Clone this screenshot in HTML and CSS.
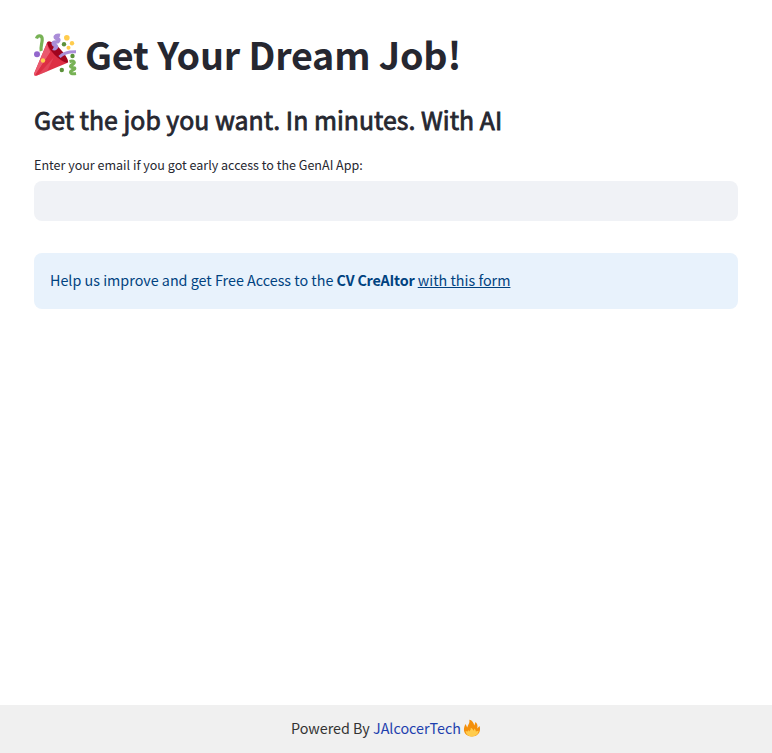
FILE: index.html
```html
<!DOCTYPE html>
<html lang="en">
<head>
<meta charset="utf-8">
<title>Get Your Dream Job!</title>
<link rel="stylesheet" href="styles.css">
</head>
<body>
<main class="page">
  <h1 class="title">
    <svg class="party" viewBox="0 0 44 44" aria-hidden="true">
      <path d="M14.3 9 L1.2 40.2 Q0.6 43.2 3.6 42.7 L34 30 Q35.5 27 28 18 Q18 6 14.3 9Z" fill="#dd2e44"/>
      <path d="M14.3 9.5 L1.2 40.2 Q.8 42 2 42.6 L17.5 19 Q14 13 14.3 9.5Z" fill="#ea596e"/>
      <path d="M17.5 19 L2 42.6 L21 24.5Z" fill="#dd2e44"/>
      <path d="M21 24 L14 38.4 L5 42.1Z" fill="#ea596e" opacity=".5"/>
      <path d="M14.5 9 C19 5 36.5 24 35 29.5 C30 31.5 13 15.5 14.5 9Z" fill="#a0041e"/>
      <path d="M3.5 5.5 C4.5 2 9.6 1.5 9.2 7 C8.9 11 7.3 15 8.2 18" fill="none" stroke="#77b255" stroke-width="3.2"/>
      <path d="M27 2.5 C22 1.5 21 5 24 5.5 C27 6 26 9.5 22.5 9 C19 9 20 12 22.5 12.5 C25 13.5 22 16.5 20 15.5" fill="none" stroke="#aa8dd8" stroke-width="3.6"/>
      <path d="M26.5 24 C30 20 35 18.6 43 18.8" fill="none" stroke="#aa8dd8" stroke-width="2.9"/>
      <path d="M36.5 28.5 C41 27.5 43 29.5 39.5 31.5 C35 34 39.5 34.5 41.5 35 C43 36.5 37.5 37.5 37.5 39 C38 41 40 41 43 40.5" fill="none" stroke="#77b255" stroke-width="3.2"/>
      <g fill="#ffcc4d"><circle cx="33.8" cy="4.8" r="2.8"/><circle cx="39" cy="10.3" r="2.2"/><circle cx="35.5" cy="14.8" r="2"/><circle cx="10" cy="27.5" r="2.2"/></g>
      <g fill="#5c913b"><circle cx="31" cy="11.3" r="2.2"/><circle cx="39.5" cy="23" r="2.2"/><circle cx="28.8" cy="37" r="2.2"/></g>
      <circle cx="4" cy="21.2" r="3" fill="#9266cc"/>
    </svg><span class="title-text">Get Your Dream Job!</span>
  </h1>
  <h2 class="subtitle"><span>Get the job you want. In minutes. With AI</span></h2>
  <label class="label" for="email"><span>Enter your email if you got early access to the GenAI App:</span></label>
  <input class="field" id="email" type="text">
  <p class="notice"><span>Help us improve and get Free Access to the <strong class="product">CV CreAItor</strong> <a class="form-link" href="#">with this form</a></span></p>
</main>
<footer class="footer">
  <span>Powered By <a class="brand" href="#">JAlcocerTech</a></span>
  <svg class="fire" viewBox="0 0 18 18" aria-hidden="true">
    <path d="M1.3 8 C-.2 13.5 3 17.5 9 17.5 C15 17.5 18.4 12.5 16.5 7 L14.2 9.5 C14.8 7 14.5 4.5 12.5 3 L11.3 6.5 C10.8 3.5 9 1 6.2 .7 C7.2 4 5 5.8 4.2 8.5 L2.6 5 Q1.6 6.5 1.3 8Z" fill="#f4900c"/>
    <path d="M2.6 12 C2.8 15.5 5.8 17.5 9 17.5 C12.5 17.5 15.6 15 15.6 11.8 L12.8 12.6 Q13.1 10.8 11.5 9.5 L10.6 11.8 Q9.6 9 7.8 8.7 Q8.2 10.5 6.2 12.6 L5.2 11 L4.7 12.6Z" fill="#ffcc4d"/>
  </svg>
</footer>
</body>
</html>
```
FILE: styles.css
```css
* { box-sizing: border-box; }
body {
  margin: 0;
  min-height: 100vh;
  display: flex;
  flex-direction: column;
  background: #fff;
  color: #262730;
  font: 14.33px/22px "Noto Sans CJK JP", "Noto Sans", sans-serif;
}
.page { flex: 1; padding: 32px 34px 0; }
.title {
  display: flex;
  gap: 8px;
  height: 48px;
  margin: 0;
  font-size: 37.7px;
  line-height: 43px;
  letter-spacing: -0.19px;
  font-weight: 700;
  white-space: nowrap;
}
.party { width: 44px; height: 44px; flex: none; margin: 1px 0 0 -1px; }
.subtitle {
  margin: 24px 0 0;
  height: 34px;
  font-size: 24.8px;
  line-height: 31px;
  letter-spacing: 0.04px;
  font-weight: 400;
  -webkit-text-stroke: 0.8px #262730;
  white-space: nowrap;
}
.label {
  display: block;
  height: 22px;
  margin-top: 17px;
  font-size: 12.54px;
  line-height: 20px;
}
.field {
  display: block;
  width: 100%;
  height: 40px;
  margin-top: 4px;
  border: 0;
  border-radius: 8px;
  background: #f0f2f6;
}
.notice {
  margin: 32px 0 0;
  height: 56px;
  padding: 16px;
  border-radius: 8px;
  background: #e8f2fc;
  color: #004280;
}
.product { letter-spacing: -0.2px; }
.form-link { color: inherit; }
.footer {
  display: flex;
  justify-content: center;
  align-items: flex-start;
  gap: 2px;
  height: 48px;
  padding-top: 12px;
  background: #f0f0f0;
  color: #333;
}
.brand { color: #1e3fae; text-decoration: none; }
.fire { width: 18px; height: 18px; margin-top: 2px; }
```
